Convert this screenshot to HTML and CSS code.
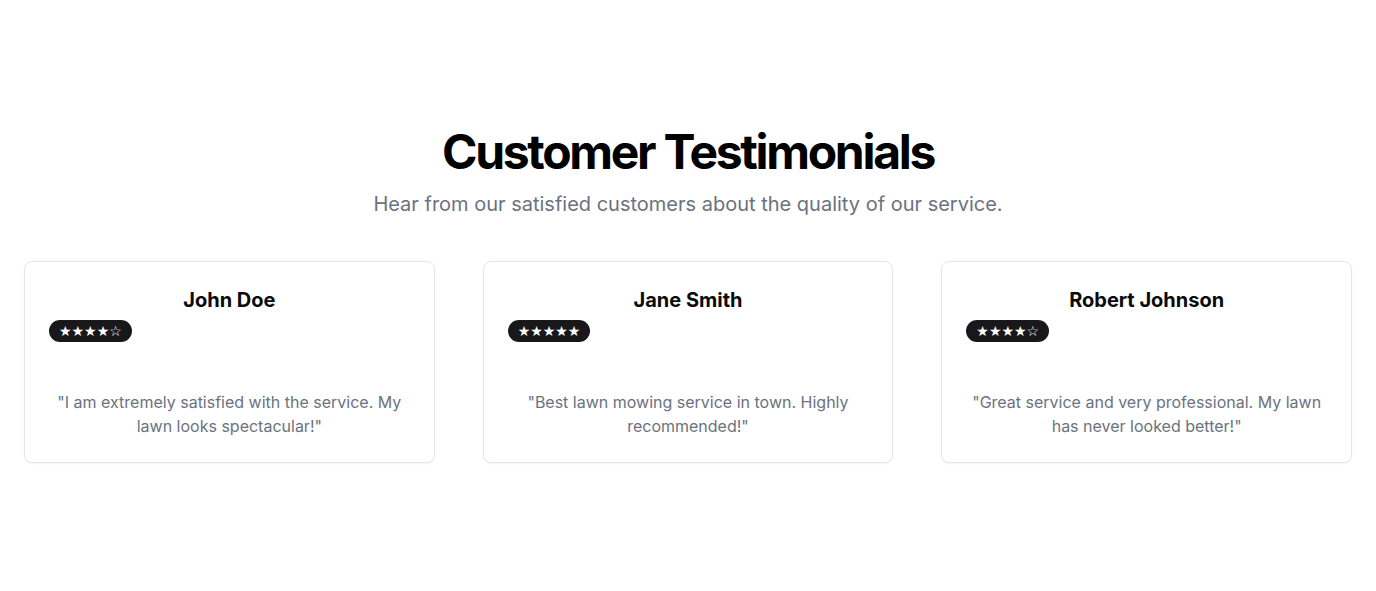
FILE: index.html
```html
<!DOCTYPE html>
<html lang="en">
<head>
<meta charset="utf-8">
<title>Customer Testimonials</title>
<link rel="stylesheet" href="styles.css">
</head>
<body>
<section class="section">
  <div class="intro">
    <h2 class="title">Customer Testimonials</h2>
    <p class="subtitle">Hear from our satisfied customers about the quality of our service.</p>
  </div>
  <div class="grid">
    <div class="card">
      <div class="card-header">
        <h3 class="name">John Doe</h3>
        <span class="badge">★★★★☆</span>
      </div>
      <div class="card-content">
        <p class="quote">"I am extremely satisfied with the service. My lawn looks spectacular!"</p>
      </div>
    </div>
    <div class="card">
      <div class="card-header">
        <h3 class="name">Jane Smith</h3>
        <span class="badge">★★★★★</span>
      </div>
      <div class="card-content">
        <p class="quote">"Best lawn mowing service in town. Highly recommended!"</p>
      </div>
    </div>
    <div class="card">
      <div class="card-header">
        <h3 class="name">Robert Johnson</h3>
        <span class="badge">★★★★☆</span>
      </div>
      <div class="card-content">
        <p class="quote">"Great service and very professional. My lawn has never looked better!"</p>
      </div>
    </div>
  </div>
</section>
</body>
</html>
```

FILE: styles.css
```css
* { box-sizing: border-box; }
html, body { margin: 0; padding: 0; background: #fff; }
body {
  font-family: Inter, "Noto Sans", "DejaVu Sans", sans-serif;
  color: #0a0a0a;
}
.section {
  padding: 128px 24px 48px;
}
.intro {
  display: flex;
  flex-direction: column;
  align-items: center;
  text-align: center;
}
.title {
  margin: 0;
  font-size: 48px;
  line-height: 48px;
  font-weight: 700;
  letter-spacing: -0.048em;
  color: #000;
}
.subtitle {
  margin: 14px 0 0;
  font-size: 20px;
  line-height: 28px;
  color: #6b7280;
}
.grid {
  margin-top: 43px;
  display: grid;
  grid-template-columns: repeat(3, 1fr);
  gap: 48px;
}
.card {
  border: 1px solid #e5e7eb;
  border-radius: 8px;
  background: #fff;
  box-shadow: 0 1px 2px rgba(0,0,0,0.05);
}
.card-header {
  padding: 24px;
  display: flex;
  flex-direction: column;
  align-items: flex-start;
  gap: 6px;
}
.name {
  align-self: stretch;
  margin: 0;
  text-align: center;
  font-size: 20px;
  line-height: 28px;
  font-weight: 700;
}
.badge {
  display: inline-flex;
  align-items: center;
  height: 22px;
  padding: 0 10px;
  border-radius: 9999px;
  background: #18181b;
  color: #fff;
  font-family: "DejaVu Sans", sans-serif;
  font-size: 14px;
  font-weight: 700;
}
.card-content {
  padding: 24px;
}
.quote {
  margin: 0;
  text-align: center;
  font-size: 16px;
  line-height: 24px;
  color: #6b7280;
}
```
